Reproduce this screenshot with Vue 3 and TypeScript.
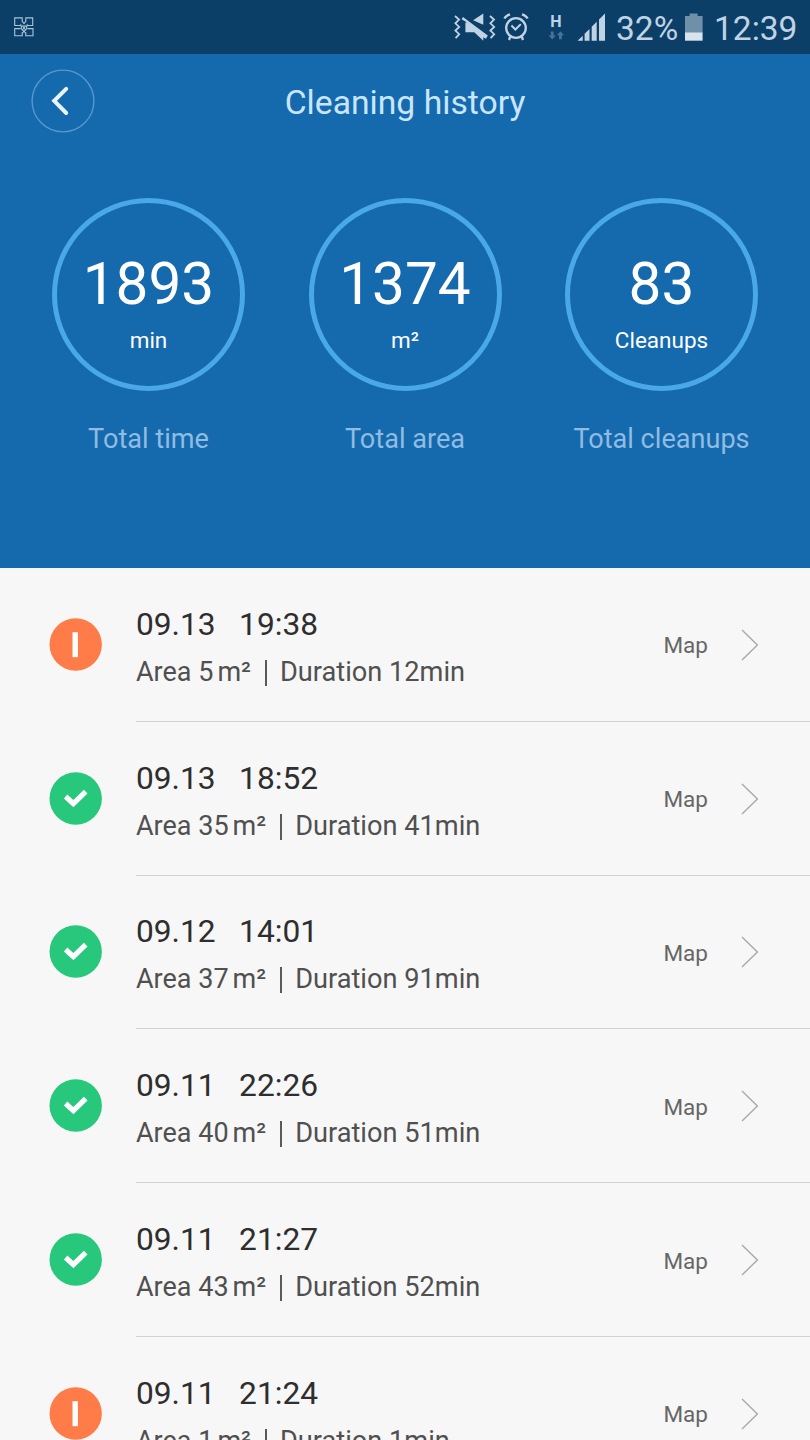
<script setup lang="ts">
interface Stat {
  value: number
  unit: string
  label: string
}

interface Cleanup {
  date: string
  time: string
  area: number
  duration: number
  done: boolean
}

const stats: Stat[] = [
  { value: 1893, unit: 'min', label: 'Total time' },
  { value: 1374, unit: 'm²', label: 'Total area' },
  { value: 83, unit: 'Cleanups', label: 'Total cleanups' },
]

const cleanups: Cleanup[] = [
  { date: '09.13', time: '19:38', area: 5, duration: 12, done: false },
  { date: '09.13', time: '18:52', area: 35, duration: 41, done: true },
  { date: '09.12', time: '14:01', area: 37, duration: 91, done: true },
  { date: '09.11', time: '22:26', area: 40, duration: 51, done: true },
  { date: '09.11', time: '21:27', area: 43, duration: 52, done: true },
  { date: '09.11', time: '21:24', area: 1, duration: 1, done: false },
]
</script>

<template>
  <div class="screen">
    <div class="status-bar">
      <svg class="app-icon" width="22" height="22" viewBox="13 16 22 22" fill="none" stroke="#a9c3d8" stroke-width="1.1">
        <path d="M22.2 21.6V17.9h-7.5v7.6h5.6l1-1M25.8 21.6v-3.7h6.9v7.6h-5l-1-1M20.6 28.6h-5.9v7.2h7.5v-3.4M27.4 28.6H33v7.2h-7.2v-3.4" />
        <path d="M22 21l2 2.6 2-2.6M21.3 26.1h5.4v2.6L24 31.4l-2.7-2.7zM22 33.4l2-2 2 2" />
        <circle cx="24" cy="28.2" r="0.7" />
      </svg>
      <svg class="mute" width="42" height="30" viewBox="454 12 42 30">
        <g fill="none" stroke="#c0d3e4" stroke-width="1.8">
          <path d="M455 16l4 3.6-3.6 3.7 3.8 3.6-3.8 3.7 3.8 3.6-3.6 4" />
          <path d="M490 16l4 3.6-3.6 3.7 3.8 3.6-3.8 3.7 3.8 3.6-3.6 4" />
        </g>
        <path fill="#c0d3e4" d="M483.3 13.5v11.3l-10.2-4.6zM463 17l24.8 18.6-1.9 3.1-2.6-1.5v3.6l-9-8.5h-8.9v-9.9h1.6l-5.4-3.2z" />
      </svg>
      <svg class="alarm" width="26" height="30" viewBox="503 12 26 30" fill="none" stroke="#c0d3e4">
        <circle cx="516" cy="28" r="9.8" stroke-width="2.3" />
        <path stroke-width="2.3" d="M504.4 18.6q1.4-3 5.6-4.2M527.6 18.6q-1.4-3-5.6-4.2M510.4 36l-1.4 4M521.6 36l1.4 4" />
        <path stroke-width="2" d="M511.4 25.5l4 4 5.4-5.4" />
      </svg>
      <div class="network">
        <span class="network-type">H</span>
        <svg width="16" height="9" viewBox="548 31 16 9" fill="#47729a">
          <path d="M550.8 31.6h2.8v4h2.2l-3.6 4-3.6-4h2.2zM559 39.2h2.8v-4h2.2l-3.6-4-3.6 4h2.2z" />
        </svg>
      </div>
      <svg class="signal" width="29" height="30" viewBox="577 12 29 30" fill="#c0d3e4">
        <path d="M577.6 40.8l5.1-5.1v5.1zM584.6 33.8l4.9-4.9v11.9h-4.9zM591.7 26.7l5-5v19.1h-5zM599 19.4l6-6v27.4h-6z" />
      </svg>
      <span class="battery-text">32%</span>
      <svg class="battery" width="20" height="30" viewBox="684 12 20 30">
        <path fill="#7090aa" d="M685 16h4.6v-2.4h8V16h5v17h-17.6z" />
        <path fill="#d9e3ec" d="M685 32.5h17.6v8.2H685z" />
      </svg>
      <span class="clock">12:39</span>
    </div>

    <header class="header">
      <div class="title-bar">
        <button class="back" aria-label="Back">
          <svg width="64" height="64" viewBox="0 0 64 64" fill="none">
            <circle cx="32" cy="32" r="30.9" stroke="#5698d0" stroke-width="1.4" />
            <path d="M35.2 19.9L23.2 31.8l12 12.2" stroke="#e9f4ff" stroke-width="4" stroke-linecap="round" stroke-linejoin="miter" />
          </svg>
        </button>
        <h1>Cleaning history</h1>
      </div>
      <div class="stats">
        <div v-for="s in stats" :key="s.label" class="stat">
          <div class="ring">
            <span class="value">{{ s.value }}</span>
            <span class="unit">{{ s.unit }}</span>
          </div>
          <span class="label">{{ s.label }}</span>
        </div>
      </div>
    </header>

    <ul class="list">
      <li v-for="c in cleanups" :key="c.date + c.time" class="row">
        <svg class="badge" width="53" height="53" viewBox="0 0 53 53">
          <circle cx="26.7" cy="26.5" r="26.2" :fill="c.done ? '#27c87b' : '#ff7b47'" />
          <path v-if="c.done" d="M16.6 24.5l7.8 7.2 12.3-12" fill="none" stroke="#fff" stroke-width="5.2" />
          <path v-else d="M23.5 14.2h5.4v25h-5.4z" fill="#fff" />
        </svg>
        <div class="body">
          <div class="info">
            <div class="when"><span>{{ c.date }}</span><span>{{ c.time }}</span></div>
            <div class="detail">
              <span>Area {{ c.area }}</span><span class="area-unit">m²</span><i class="bar"></i><span class="duration">Duration {{ c.duration }}min</span>
            </div>
          </div>
          <span class="map">Map</span>
          <svg class="chevron" width="20" height="34" viewBox="0 0 20 34" fill="none">
            <path d="M2 2l15.4 15L2 32" stroke="#a9a9a9" stroke-width="1.4" />
          </svg>
        </div>
      </li>
    </ul>
  </div>
</template>

<style>
body {
  margin: 0;
  background: #f7f7f7;
}
</style>

<style scoped>
.screen {
  width: 810px;
  height: 1440px;
  overflow: hidden;
  background: #f7f7f7;
  font-family: Roboto, "Noto Sans", sans-serif;
  white-space: nowrap;
}

.status-bar {
  display: flex;
  align-items: flex-start;
  box-sizing: border-box;
  height: 54px;
  padding: 12px 0 0 13px;
  background: #0c3f68;
  color: #c0d3e4;
}
.app-icon { margin-top: 4px; }
.mute { margin-left: 419px; }
.alarm { margin-left: 7px; }
.network {
  display: flex;
  flex-direction: column;
  align-items: center;
  width: 16px;
  margin-left: 19px;
}
.network-type {
  height: 19px;
  font-size: 16px;
  font-weight: 700;
  line-height: 19px;
}
.signal { margin-left: 13px; }
.battery-text,
.clock {
  font-size: 33.5px;
  line-height: 33px;
}
.battery-text {
  width: 68px;
  margin-left: 10px;
}
.clock { margin-left: 10px; }

.header {
  height: 514px;
  background: #1569ad;
}
.title-bar {
  display: grid;
  grid-template-columns: 64px 1fr 64px;
  align-items: center;
  padding: 15px 31px 0;
}
.back {
  display: block;
  width: 64px;
  height: 64px;
  padding: 0;
  border: 0;
  background: none;
}
.back svg { display: block; }
h1 {
  margin: 4px 0 0;
  color: #c9e5ff;
  font-size: 33.7px;
  font-weight: 400;
  line-height: 40px;
  text-align: center;
}
.stats {
  display: grid;
  grid-template-columns: repeat(3, 256.5px);
  justify-content: center;
  margin-top: 65px;
}
.stat {
  display: flex;
  flex-direction: column;
  align-items: center;
}
.ring {
  display: flex;
  flex-direction: column;
  align-items: center;
  box-sizing: border-box;
  width: 193px;
  height: 193px;
  padding-top: 50px;
  border: 5px solid #49a8e9;
  border-radius: 50%;
  color: #fff;
}
.value {
  font-size: 58.5px;
  line-height: 63px;
}
.unit {
  margin-top: 11px;
  font-size: 22.5px;
  line-height: 26px;
}
.label {
  margin-top: 32px;
  color: #8fbce3;
  font-size: 27.1px;
  line-height: 32px;
}

.list {
  margin: 0;
  padding: 0;
  list-style: none;
}
.row {
  display: flex;
  align-items: center;
  height: 153.8px;
  padding-left: 49px;
}
.badge {
  flex: none;
  margin-bottom: 1px;
}
.body {
  display: flex;
  flex: 1;
  align-items: center;
  box-sizing: border-box;
  height: 100%;
  margin-left: 34px;
  padding-right: 50px;
  border-bottom: 1px solid #d3d3d3;
}
.info { flex: 1; }
.when {
  display: flex;
  gap: 23.5px;
  margin-top: 5px;
  color: #2e2e2e;
  font-size: 31.7px;
  line-height: 40px;
}
.detail {
  display: flex;
  align-items: center;
  margin-top: 10px;
  color: #505050;
  font-size: 27px;
  line-height: 34px;
}
.area-unit { margin-left: 4px; }
.bar {
  width: 2px;
  height: 26px;
  margin: 2px 13px 0 14px;
  background: #5a5a5a;
}
.duration { font-size: 27.2px; }
.map {
  margin-top: 2px;
  color: #666;
  font-size: 22.5px;
}
.chevron { margin: 1px 0 0 32px; }
</style>
